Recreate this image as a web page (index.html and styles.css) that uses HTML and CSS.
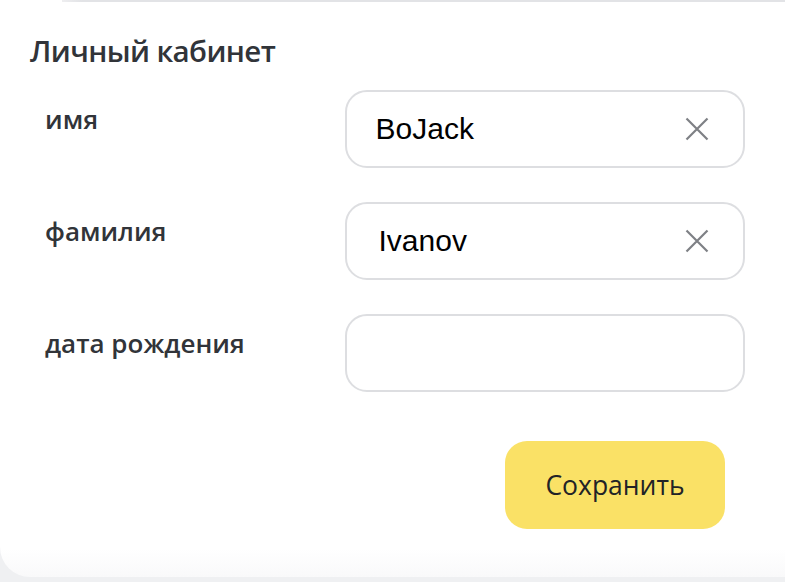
FILE: index.html
```html
<!DOCTYPE html>
<html lang="ru">
<head>
<meta charset="utf-8">
<title>Личный кабинет</title>
<link rel="stylesheet" href="styles.css">
</head>
<body>
<div class="card">
  <div class="topline"></div>
  <h1 class="title">Личный кабинет</h1>
  <form class="form">
    <div class="row">
      <label class="label" for="name">имя</label>
      <div class="field">
        <input class="input" id="name" type="text" value="BoJack">
        <span class="clear" aria-hidden="true">
          <svg width="24" height="24" viewBox="0 0 24 24"><path d="M1.5 1.5 L22.5 22.5 M22.5 1.5 L1.5 22.5" stroke="#7e8085" stroke-width="2.2" fill="none"/></svg>
        </span>
      </div>
    </div>
    <div class="row">
      <label class="label" for="surname">фамилия</label>
      <div class="field">
        <input class="input input-indent" id="surname" type="text" value="Ivanov">
        <span class="clear" aria-hidden="true">
          <svg width="24" height="24" viewBox="0 0 24 24"><path d="M1.5 1.5 L22.5 22.5 M22.5 1.5 L1.5 22.5" stroke="#7e8085" stroke-width="2.2" fill="none"/></svg>
        </span>
      </div>
    </div>
    <div class="row">
      <label class="label" for="birth">дата рождения</label>
      <div class="field">
        <input class="input" id="birth" type="text" value="">
      </div>
    </div>
    <div class="actions">
      <button class="btn" type="button">Сохранить</button>
    </div>
  </form>
</div>
</body>
</html>
```
FILE: styles.css
```css
html, body {
  margin: 0;
  padding: 0;
}
body {
  background: #eff0f2;
  width: 785px;
  height: 582px;
  overflow: hidden;
}
.card {
  background: linear-gradient(#ffffff calc(100% - 28px), #f9f9fa);
  height: 577px;
  border-bottom-left-radius: 30px;
  box-sizing: border-box;
}
.topline {
  height: 2px;
  margin-left: 62px;
  background: linear-gradient(90deg, #eeeef0, #e2e3e6 20px);
}
.title {
  margin: 31px 0 0 30px;
  font-family: "Open Sans", "Noto Sans", sans-serif;
  font-weight: 600;
  font-size: 29.5px;
  line-height: 36px;
  color: #313439;
  letter-spacing: -0.6px;
}
.form {
  margin-top: 21px;
  display: flex;
  flex-direction: column;
  gap: 34px;
}
.row {
  display: flex;
  align-items: flex-start;
}
.label {
  flex: 0 0 345px;
  padding-left: 45px;
  box-sizing: border-box;
  padding-top: 14px;
  font-family: "Open Sans", "Noto Sans", sans-serif;
  font-weight: 600;
  font-size: 26px;
  line-height: 31px;
  color: #313439;
}
.field {
  position: relative;
  flex: 0 0 400px;
  height: 78px;
}
.input {
  width: 100%;
  height: 100%;
  box-sizing: border-box;
  border: 2px solid #dddee1;
  border-radius: 22px;
  padding: 0 70px 0 28.5px;
  font-family: "Liberation Sans", Arial, sans-serif;
  font-size: 30px;
  color: #000;
  background: #fff;
  outline: none;
}
.input-indent {
  padding-left: 31.5px;
}
.clear {
  position: absolute;
  right: 36px;
  top: 27px;
  width: 24px;
  height: 24px;
  display: block;
}
.clear svg {
  display: block;
}
.actions {
  display: flex;
  padding-left: 505px;
  margin-top: 15px;
}
.btn {
  width: 220px;
  height: 88px;
  border: none;
  border-radius: 22px;
  background: #fae166;
  font-family: "Open Sans", "Noto Sans", sans-serif;
  font-size: 26.5px;
  color: #222326;
  padding: 0;
  cursor: pointer;
}
```
